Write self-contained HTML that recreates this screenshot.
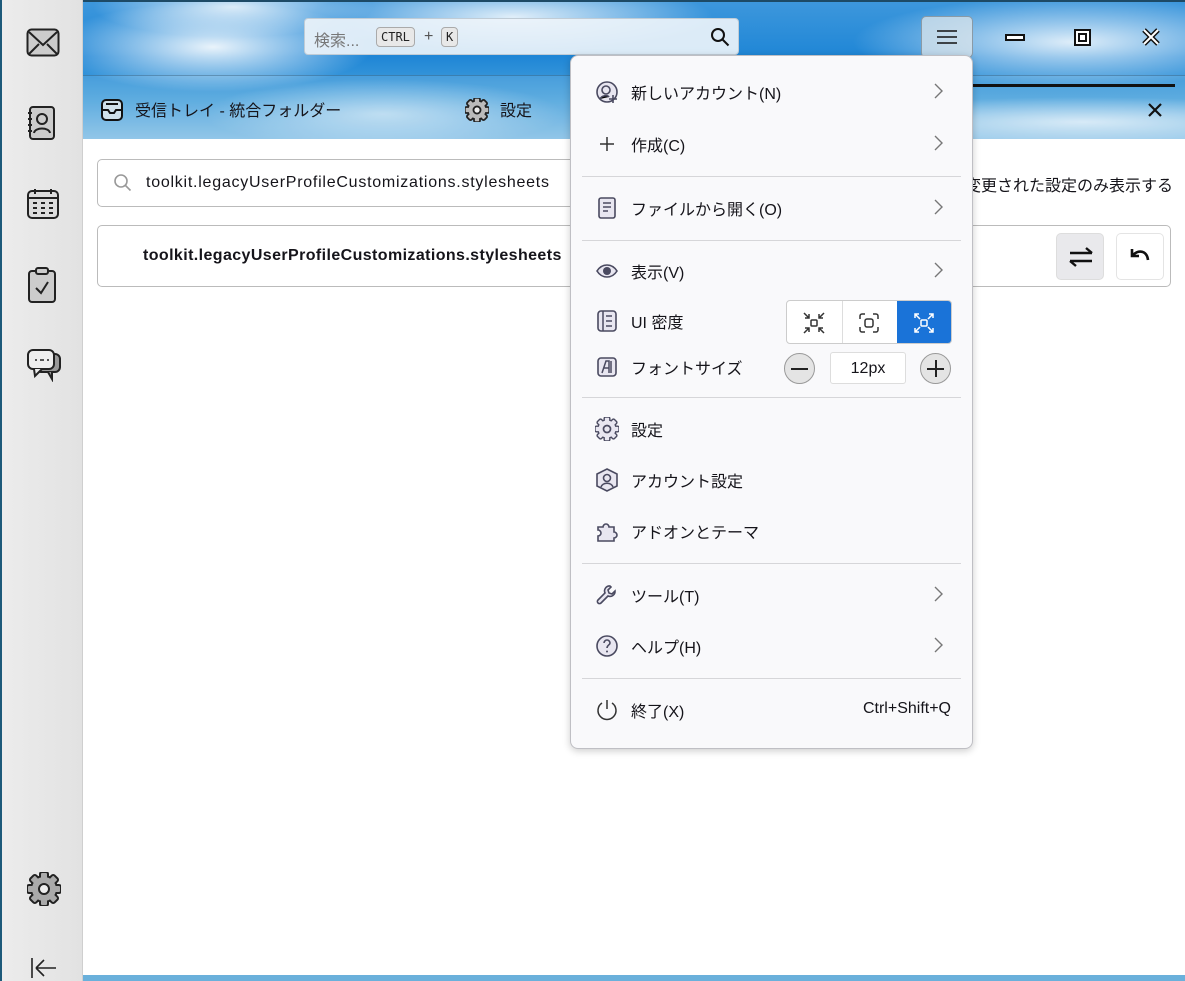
<!DOCTYPE html>
<html><head><meta charset="utf-8"><style>
*{box-sizing:border-box;margin:0;padding:0}
body{width:1185px;height:981px;overflow:hidden;position:relative;font-family:"Liberation Sans","Noto Sans CJK JP",sans-serif;background:#fff;color:#15141a}
.side{position:absolute;left:0;top:0;width:83px;height:981px;background:linear-gradient(90deg,#ececec,#e2e2e2);border-left:2px solid #1d5a7a;border-right:1px solid #cfcfcf}
.sky{position:absolute;left:83px;top:0;width:1102px;height:139px;
background:
radial-gradient(ellipse 160px 45px at 130px 45px,rgba(255,255,255,.9),transparent),
radial-gradient(ellipse 200px 35px at 430px 15px,rgba(255,255,255,.85),transparent),
radial-gradient(ellipse 140px 30px at 150px 5px,rgba(255,255,255,.8),transparent),
radial-gradient(ellipse 220px 45px at 990px 40px,rgba(255,255,255,.85),transparent),
radial-gradient(ellipse 260px 25px at 1000px 120px,rgba(255,255,255,.7),transparent),
radial-gradient(ellipse 180px 35px at 300px 112px,rgba(255,255,255,.55),transparent),
linear-gradient(180deg,#3d97dc,#1f86d6 40%,#4aa2dc 70%,#86c0e6);border-top:2px solid #1d4a66}
.tabbar{position:absolute;left:83px;top:75px;width:1102px;height:64px;border-top:1px solid rgba(40,80,110,.4);background:rgba(255,255,255,.1)}
.search{position:absolute;left:304px;top:18px;width:435px;height:37px;background:rgba(235,243,250,.92);border:1px solid #c0ccd6;border-radius:4px;font-size:16px;color:#777}
.kbd{display:inline-block;border:1px solid #aaa;border-radius:4px;background:#e8e8e8;font-family:"DejaVu Sans Mono",monospace;font-size:12px;color:#222;padding:1px 4px;line-height:16px}
.content{position:absolute;left:83px;top:139px;width:1102px;height:836px;background:#fff}
.bottom{position:absolute;left:83px;top:975px;width:1102px;height:6px;background:#6ab0db}
.inp{position:absolute;left:97px;top:159px;width:500px;height:48px;border:1px solid #bbb;border-radius:5px;font-size:16px}
.row{position:absolute;left:97px;top:225px;width:1074px;height:62px;border:1px solid #bbb;border-radius:5px}
.menu{position:absolute;left:570px;top:55px;width:403px;height:694px;background:#f9f9fb;border:1px solid #bfbfc4;border-radius:8px;box-shadow:0 2px 8px rgba(0,0,0,.2)}
.mi{position:absolute;left:0;width:403px;height:40px;display:flex;align-items:center;font-size:16px;color:#15141a}
.mi .ic{position:absolute;left:24px;top:8px;width:24px;height:24px}
.mi .t{position:absolute;left:60px;top:8px}
.mi .ar{position:absolute;left:362px;top:10px}
.sep{position:absolute;left:11px;width:379px;height:1px;background:#d6d6d9}
svg{display:block}
</style></head><body>
<svg width="0" height="0" style="position:absolute"><defs>
<g id="gearshape"><rect x="14" y="1" width="6" height="32" rx="1"/><rect x="14" y="1" width="6" height="32" rx="1" transform="rotate(45 17 17)"/><rect x="14" y="1" width="6" height="32" rx="1" transform="rotate(90 17 17)"/><rect x="14" y="1" width="6" height="32" rx="1" transform="rotate(135 17 17)"/><circle cx="17" cy="17" r="12"/></g>
</defs></svg>
<div class="side">
 <svg style="position:absolute;left:24px;top:28px" width="34" height="30" viewBox="0 0 34 30"><rect x="1.5" y="1.5" width="31" height="26" rx="4" fill="#ccc" stroke="#222" stroke-width="2"/><path d="M3 4l14 13L31 4M3 26l10-10M31 26L21 16" stroke="#222" stroke-width="2" fill="none"/></svg>
 <svg style="position:absolute;left:24px;top:105px" width="32" height="36" viewBox="0 0 32 36"><rect x="4" y="2" width="24" height="32" rx="3" fill="#ccc" stroke="#222" stroke-width="2"/><circle cx="16" cy="14" r="5" fill="none" stroke="#222" stroke-width="2"/><path d="M8 28c1-6 15-6 16 0M2 8h4M2 14h4M2 20h4M2 26h4" stroke="#222" stroke-width="2" fill="none"/></svg>
 <svg style="position:absolute;left:24px;top:188px" width="34" height="32" viewBox="0 0 34 32"><rect x="2" y="3" width="30" height="27" rx="4" fill="#ddd" stroke="#222" stroke-width="2"/><path d="M2 10h30M9 1v5M25 1v5M7 15h4M15 15h4M23 15h4M7 20h4M15 20h4M23 20h4M7 25h4M15 25h4M23 25h4" stroke="#222" stroke-width="2"/></svg>
 <svg style="position:absolute;left:25px;top:266px" width="32" height="38" viewBox="0 0 32 38"><rect x="2" y="5" width="26" height="31" rx="3" fill="#ccc" stroke="#222" stroke-width="2"/><rect x="9" y="2" width="12" height="6" rx="2" fill="#ccc" stroke="#222" stroke-width="2"/><path d="M9 22l5 5 7-11" stroke="#222" stroke-width="2" fill="none"/></svg>
 <svg style="position:absolute;left:24px;top:348px" width="36" height="34" viewBox="0 0 36 34"><rect x="10" y="6" width="24" height="18" rx="5" fill="#999" stroke="#222" stroke-width="2"/><path d="M22 24l4 7v-7" fill="#999" stroke="#222" stroke-width="2"/><rect x="2" y="2" width="26" height="19" rx="5" fill="#eee" stroke="#222" stroke-width="2"/><path d="M8 21l1 7 7-7" fill="#eee" stroke="#222" stroke-width="2"/><path d="M9 12h2M14 12h4M21 12h2" stroke="#222" stroke-width="1.5"/></svg>
 <svg style="position:absolute;left:25px;top:872px" width="34" height="34" viewBox="0 0 34 34"><use href="#gearshape" fill="#222" stroke="#222" stroke-width="4"/><use href="#gearshape" fill="#aaa"/><circle cx="17" cy="17" r="5" fill="#eee" stroke="#222" stroke-width="2"/></svg>
 <svg style="position:absolute;left:28px;top:956px" width="28" height="24" viewBox="0 0 28 24"><path d="M2 2v20M6 12h20M6 12l8-8M6 12l8 8" stroke="#222" stroke-width="1.6" fill="none"/></svg>
</div>
<div class="sky"></div>
<div class="tabbar"></div>
<div class="search">
 <span style="position:absolute;left:9px;top:8px">検索...</span>
 <span class="kbd" style="position:absolute;left:71px;top:8px">CTRL</span>
 <span style="position:absolute;left:119px;top:9px;color:#555">+</span>
 <span class="kbd" style="position:absolute;left:136px;top:8px">K</span>
 <svg style="position:absolute;left:405px;top:8px" width="20" height="20" viewBox="0 0 20 20"><circle cx="8" cy="8" r="6" fill="none" stroke="#111" stroke-width="2"/><path d="M12.5 12.5l6 6" stroke="#111" stroke-width="2"/></svg>
</div>
<div style="position:absolute;left:921px;top:16px;width:52px;height:42px;border:1px solid #8a9aa6;border-radius:5px;background:rgba(220,230,235,.75)"></div>
<svg style="position:absolute;left:937px;top:29px" width="20" height="16"><path d="M0 2h20M0 8h20M0 14h20" stroke="#111" stroke-width="1.6"/></svg>
<div style="position:absolute;left:1005px;top:34px;width:20px;height:7px;border:2px solid #111;background:#fff"></div>
<div style="position:absolute;left:1074px;top:29px;width:17px;height:17px;border:2px solid #111;background:#fff"><div style="margin:2px;width:9px;height:9px;border:2px solid #111"></div></div>
<svg style="position:absolute;left:1141px;top:27px" width="20" height="20"><path d="M3 3l14 14M17 3L3 17" stroke="#111" stroke-width="5"/><path d="M3 3l14 14M17 3L3 17" stroke="#fff" stroke-width="2"/></svg>
<div style="position:absolute;left:972px;top:84px;width:203px;height:3px;background:#111"></div>
<svg style="position:absolute;left:1147px;top:102px" width="16" height="16"><path d="M2 2l12 12M14 2L2 14" stroke="#111" stroke-width="2.2"/></svg>
<svg style="position:absolute;left:101px;top:99px" width="22" height="22" viewBox="0 0 22 22"><rect x="1" y="1" width="20" height="20" rx="4" fill="#cfe0ea" stroke="#111" stroke-width="2"/><path d="M1 11h6l2 3h4l2-3h6M5 5h12" stroke="#111" stroke-width="2" fill="none"/></svg>
<div style="position:absolute;left:135px;top:97px;font-size:16px">受信トレイ - 統合フォルダー</div>
<svg style="position:absolute;left:465px;top:98px" width="24" height="24" viewBox="0 0 34 34"><use href="#gearshape" fill="#222" stroke="#222" stroke-width="5"/><use href="#gearshape" fill="#bbb"/><circle cx="17" cy="17" r="5" fill="#eee" stroke="#222" stroke-width="2.6"/></svg>
<div style="position:absolute;left:500px;top:97px;font-size:16px">設定</div>
<div class="content"></div>
<div class="bottom"></div>
<div class="inp"><svg style="position:absolute;left:15px;top:13px" width="20" height="20"><circle cx="8" cy="8" r="6" fill="none" stroke="#999" stroke-width="1.6"/><path d="M12.5 12.5l5 5" stroke="#999" stroke-width="1.6"/></svg><span style="position:absolute;left:48px;top:14px;letter-spacing:.75px">toolkit.legacyUserProfileCustomizations.stylesheets</span></div>
<div style="position:absolute;left:965px;top:172px;font-size:16px">変更された設定のみ表示する</div>
<div class="row"><span style="position:absolute;left:45px;top:21px;font-size:16px;font-weight:bold;letter-spacing:.4px">toolkit.legacyUserProfileCustomizations.stylesheets</span>
<div style="position:absolute;left:958px;top:7px;width:48px;height:47px;background:#e9e9ec;border:1px solid #ddd;border-radius:5px"><svg style="position:absolute;left:11px;top:12px" width="26" height="22"><path d="M2 7h22M18 2l6 5M24 15H2M8 20l-6-5" stroke="#111" stroke-width="2.4" fill="none"/></svg></div>
<div style="position:absolute;left:1018px;top:7px;width:48px;height:47px;background:#fff;border:1px solid #e4e4e4;border-radius:5px"><svg style="position:absolute;left:12px;top:13px" width="24" height="20"><path d="M4 8c6-6 14-4 15 5M3 2v7h7" stroke="#111" stroke-width="2.6" fill="none"/></svg></div></div>

<div class="menu">
 <div class="mi" style="top:16px"><svg class="ic" viewBox="0 0 24 24"><circle cx="12" cy="12" r="10" fill="#e8e6f0" stroke="#4a4a60" stroke-width="1.6"/><circle cx="11" cy="10" r="4" fill="none" stroke="#4a4a60" stroke-width="1.6"/><path d="M5 19c2-4 8-4 9-2M18 15v8M14 19h8" stroke="#4a4a60" stroke-width="1.6"/></svg><span class="t">新しいアカウント(N)</span><svg class="ar" width="12" height="18"><path d="M2 2l7 7-7 7" stroke="#777" stroke-width="1.4" fill="none"/></svg></div>
 <div class="mi" style="top:68px"><svg class="ic" viewBox="0 0 24 24"><path d="M12 5v14M5 12h14" stroke="#333" stroke-width="1.5"/></svg><span class="t">作成(C)</span><svg class="ar" width="12" height="18"><path d="M2 2l7 7-7 7" stroke="#777" stroke-width="1.4" fill="none"/></svg></div>
 <div class="sep" style="top:120px"></div>
 <div class="mi" style="top:132px"><svg class="ic" viewBox="0 0 24 24"><rect x="4" y="2" width="16" height="20" rx="2" fill="#e8e6f0" stroke="#4a4a60" stroke-width="1.6"/><path d="M8 7h8M8 11h8M8 15h5" stroke="#4a4a60" stroke-width="1.5"/></svg><span class="t">ファイルから開く(O)</span><svg class="ar" width="12" height="18"><path d="M2 2l7 7-7 7" stroke="#777" stroke-width="1.4" fill="none"/></svg></div>
 <div class="sep" style="top:184px"></div>
 <div class="mi" style="top:195px"><svg class="ic" viewBox="0 0 24 24"><path d="M2 12c5-8 15-8 20 0-5 8-15 8-20 0z" fill="#e8e6f0" stroke="#4a4a60" stroke-width="1.6"/><circle cx="12" cy="12" r="4" fill="#4a4a60"/></svg><span class="t">表示(V)</span><svg class="ar" width="12" height="18"><path d="M2 2l7 7-7 7" stroke="#777" stroke-width="1.4" fill="none"/></svg></div>
 <div class="mi" style="top:245px"><svg class="ic" viewBox="0 0 24 24"><rect x="3" y="2" width="18" height="20" rx="3" fill="#e8e6f0" stroke="#4a4a60" stroke-width="1.6"/><path d="M8 2v20M11 7h6M11 12h6M11 17h6" stroke="#4a4a60" stroke-width="1.5"/></svg><span class="t">UI 密度</span></div>
 <div style="position:absolute;left:215px;top:244px;width:166px;height:44px;border:1px solid #ccc;border-radius:4px;background:#fff;overflow:hidden">
  <div style="position:absolute;left:55px;top:0;width:1px;height:44px;background:#ddd"></div>
  <div style="position:absolute;left:110px;top:0;width:56px;height:44px;background:#1a73d8"></div>
  <svg style="position:absolute;left:16px;top:11px" width="22" height="22" viewBox="0 0 22 22"><rect x="8" y="8" width="6" height="6" rx="1" fill="none" stroke="#333" stroke-width="1.5"/><path d="M1 1l5 5M6 2v4H2M21 1l-5 5M16 2v4h4M1 21l5-5M6 20v-4H2M21 21l-5-5M16 20v-4h4" stroke="#333" stroke-width="1.5" fill="none"/></svg>
  <svg style="position:absolute;left:71px;top:11px" width="22" height="22" viewBox="0 0 22 22"><rect x="7" y="7" width="8" height="8" rx="2" fill="none" stroke="#333" stroke-width="1.5"/><path d="M2 7V4a2 2 0 012-2h3M15 2h3a2 2 0 012 2v3M20 15v3a2 2 0 01-2 2h-3M7 20H4a2 2 0 01-2-2v-3" stroke="#333" stroke-width="1.5" fill="none"/></svg>
  <svg style="position:absolute;left:126px;top:11px" width="22" height="22" viewBox="0 0 22 22"><rect x="8" y="8" width="6" height="6" rx="1" fill="none" stroke="#fff" stroke-width="1.5"/><path d="M2 2l5 5M2 6V2h4M20 2l-5 5M20 6V2h-4M2 20l5-5M2 16v4h4M20 20l-5-5M20 16v4h-4" stroke="#fff" stroke-width="1.5" fill="none"/></svg>
 </div>
 <div class="mi" style="top:291px"><svg class="ic" viewBox="0 0 24 24"><rect x="3" y="3" width="18" height="18" rx="3" fill="#e8e6f0" stroke="#4a4a60" stroke-width="1.6"/><path d="M7 18l4-12h3v12M9 13h5M16 6v12" stroke="#4a4a60" stroke-width="1.5" fill="none"/></svg><span class="t">フォントサイズ</span></div>
 <div style="position:absolute;left:213px;top:297px;width:31px;height:31px;border:1px solid #999;border-radius:50%;background:#e4e4e4"><div style="position:absolute;left:6px;top:14px;width:17px;height:1.5px;background:#222"></div></div>
 <div style="position:absolute;left:259px;top:296px;width:76px;height:32px;border:1px solid #ddd;border-radius:3px;background:#fff;font-size:16px;text-align:center;line-height:32px">12px</div>
 <div style="position:absolute;left:349px;top:297px;width:31px;height:31px;border:1px solid #999;border-radius:50%;background:#e4e4e4"><div style="position:absolute;left:6px;top:14px;width:17px;height:1.5px;background:#222"></div><div style="position:absolute;left:14px;top:6px;width:1.5px;height:17px;background:#222"></div></div>
 <div class="sep" style="top:341px"></div>
 <div class="mi" style="top:353px"><svg class="ic" viewBox="0 0 34 34"><use href="#gearshape" fill="#4a4a60" stroke="#4a4a60" stroke-width="4"/><use href="#gearshape" fill="#e8e6f0"/><circle cx="17" cy="17" r="5" fill="none" stroke="#4a4a60" stroke-width="2.4"/></svg><span class="t">設定</span></div>
 <div class="mi" style="top:404px"><svg class="ic" viewBox="0 0 24 24"><path d="M12 1l10 5v12l-10 5-10-5V6z" fill="#e8e6f0" stroke="#4a4a60" stroke-width="1.6"/><circle cx="12" cy="10" r="3.5" fill="none" stroke="#4a4a60" stroke-width="1.6"/><path d="M6 19c2-5 10-5 12 0" stroke="#4a4a60" stroke-width="1.6" fill="none"/></svg><span class="t">アカウント設定</span></div>
 <div class="mi" style="top:455px"><svg class="ic" viewBox="0 0 24 24"><path d="M3 8h5a3 3 0 116 0h5v5a3 3 0 110 6v3H3v-5a3 3 0 100-6z" fill="#e8e6f0" stroke="#4a4a60" stroke-width="1.6"/></svg><span class="t">アドオンとテーマ</span></div>
 <div class="sep" style="top:507px"></div>
 <div class="mi" style="top:519px"><svg class="ic" viewBox="0 0 24 24"><path d="M15 3a5 5 0 00-5 7L3 17a2 2 0 003 3l7-7a5 5 0 007-5l-3 3-3-1-1-3 3-3z" fill="#e8e6f0" stroke="#4a4a60" stroke-width="1.6"/></svg><span class="t">ツール(T)</span><svg class="ar" width="12" height="18"><path d="M2 2l7 7-7 7" stroke="#777" stroke-width="1.4" fill="none"/></svg></div>
 <div class="mi" style="top:570px"><svg class="ic" viewBox="0 0 24 24"><circle cx="12" cy="12" r="10" fill="#e8e6f0" stroke="#4a4a60" stroke-width="1.6"/><path d="M9 9a3 3 0 116 0c0 2-3 2-3 5" stroke="#4a4a60" stroke-width="1.6" fill="none"/><circle cx="12" cy="17.5" r="1" fill="#4a4a60"/></svg><span class="t">ヘルプ(H)</span><svg class="ar" width="12" height="18"><path d="M2 2l7 7-7 7" stroke="#777" stroke-width="1.4" fill="none"/></svg></div>
 <div class="sep" style="top:622px"></div>
 <div class="mi" style="top:634px"><svg class="ic" viewBox="0 0 24 24"><path d="M7 5a9 9 0 1010 0M12 2v9" stroke="#333" stroke-width="1.5" fill="none"/></svg><span class="t">終了(X)</span><span style="position:absolute;right:23px;top:10px">Ctrl+Shift+Q</span></div>
</div>
</body></html>
